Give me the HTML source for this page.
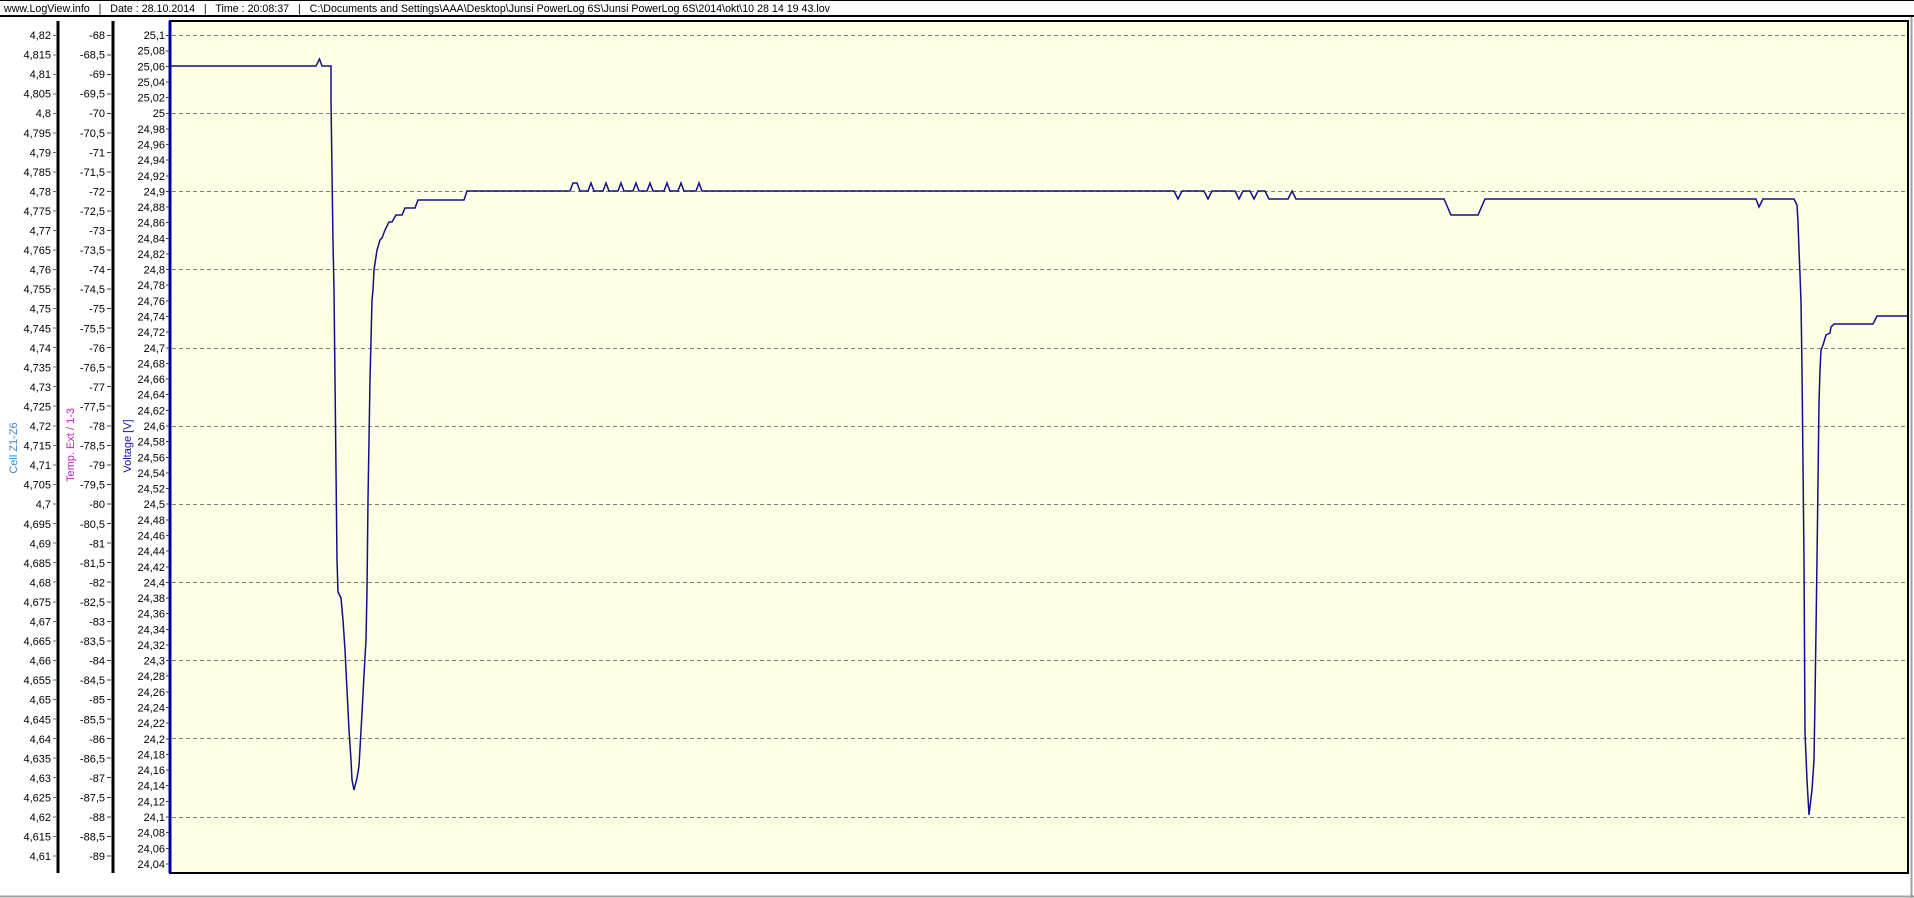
<!DOCTYPE html>
<html><head><meta charset="utf-8"><style>
html,body{margin:0;padding:0;background:#fff;width:1914px;height:898px;overflow:hidden}
svg{display:block}
text{font-family:"Liberation Sans",Arial,sans-serif}
</style></head><body>
<svg width="1914" height="898" viewBox="0 0 1914 898" xmlns="http://www.w3.org/2000/svg">
<rect width="1914" height="898" fill="#fff"/>
<line x1="0" y1="0.5" x2="1914" y2="0.5" stroke="#000"/>
<line x1="0" y1="16" x2="1914" y2="16" stroke="#000" stroke-width="2"/>
<text x="4" y="12" font-size="11" style="white-space:pre" xml:space="preserve" textLength="826" lengthAdjust="spacingAndGlyphs">www.LogView.info   |   Date : 28.10.2014   |   Time : 20:08:37   |   C:\Documents and Settings\AAA\Desktop\Junsi PowerLog 6S\Junsi PowerLog 6S\2014\okt\10 28 14 19 43.lov</text>
<line x1="1911.5" y1="17" x2="1911.5" y2="898" stroke="#a0a0a0" stroke-width="2"/>
<line x1="0" y1="896.5" x2="1914" y2="896.5" stroke="#a0a0a0" stroke-width="2"/>

<rect x="170" y="21" width="1738" height="852" fill="#ffffe6" stroke="#000" stroke-width="2"/>
<line x1="170" y1="21" x2="170" y2="873" stroke="#0000a0" stroke-width="3"/>
<line x1="58" y1="21" x2="58" y2="873" stroke="#000" stroke-width="3"/>
<line x1="113" y1="21" x2="113" y2="873" stroke="#000" stroke-width="3"/>

<g stroke="#808080" stroke-dasharray="4,3" stroke-width="1">
<line x1="172" y1="35.5" x2="1906" y2="35.5"/><line x1="172" y1="113.5" x2="1906" y2="113.5"/><line x1="172" y1="191.5" x2="1906" y2="191.5"/><line x1="172" y1="269.5" x2="1906" y2="269.5"/><line x1="172" y1="348.5" x2="1906" y2="348.5"/><line x1="172" y1="426.5" x2="1906" y2="426.5"/><line x1="172" y1="504.5" x2="1906" y2="504.5"/><line x1="172" y1="582.5" x2="1906" y2="582.5"/><line x1="172" y1="660.5" x2="1906" y2="660.5"/><line x1="172" y1="738.5" x2="1906" y2="738.5"/><line x1="172" y1="817.5" x2="1906" y2="817.5"/>
</g>

<g font-size="11" text-anchor="end">
<g fill="#000">
<text x="51" y="39">4,82</text><text x="51" y="58.6">4,815</text><text x="51" y="78.1">4,81</text><text x="51" y="97.7">4,805</text><text x="51" y="117.2">4,8</text><text x="51" y="136.8">4,795</text><text x="51" y="156.3">4,79</text><text x="51" y="175.9">4,785</text><text x="51" y="195.4">4,78</text><text x="51" y="215">4,775</text><text x="51" y="234.5">4,77</text><text x="51" y="254.1">4,765</text><text x="51" y="273.6">4,76</text><text x="51" y="293.2">4,755</text><text x="51" y="312.7">4,75</text><text x="51" y="332.3">4,745</text><text x="51" y="351.8">4,74</text><text x="51" y="371.4">4,735</text><text x="51" y="390.9">4,73</text><text x="51" y="410.5">4,725</text><text x="51" y="430">4,72</text><text x="51" y="449.6">4,715</text><text x="51" y="469.1">4,71</text><text x="51" y="488.7">4,705</text><text x="51" y="508.2">4,7</text><text x="51" y="527.8">4,695</text><text x="51" y="547.3">4,69</text><text x="51" y="566.9">4,685</text><text x="51" y="586.4">4,68</text><text x="51" y="606">4,675</text><text x="51" y="625.5">4,67</text><text x="51" y="645.1">4,665</text><text x="51" y="664.6">4,66</text><text x="51" y="684.2">4,655</text><text x="51" y="703.7">4,65</text><text x="51" y="723.3">4,645</text><text x="51" y="742.8">4,64</text><text x="51" y="762.4">4,635</text><text x="51" y="781.9">4,63</text><text x="51" y="801.5">4,625</text><text x="51" y="821">4,62</text><text x="51" y="840.6">4,615</text><text x="51" y="860.1">4,61</text>

<text x="105" y="39">-68</text><text x="105" y="58.6">-68,5</text><text x="105" y="78.1">-69</text><text x="105" y="97.7">-69,5</text><text x="105" y="117.2">-70</text><text x="105" y="136.8">-70,5</text><text x="105" y="156.3">-71</text><text x="105" y="175.9">-71,5</text><text x="105" y="195.4">-72</text><text x="105" y="215">-72,5</text><text x="105" y="234.5">-73</text><text x="105" y="254.1">-73,5</text><text x="105" y="273.6">-74</text><text x="105" y="293.2">-74,5</text><text x="105" y="312.7">-75</text><text x="105" y="332.3">-75,5</text><text x="105" y="351.8">-76</text><text x="105" y="371.4">-76,5</text><text x="105" y="390.9">-77</text><text x="105" y="410.5">-77,5</text><text x="105" y="430">-78</text><text x="105" y="449.6">-78,5</text><text x="105" y="469.1">-79</text><text x="105" y="488.7">-79,5</text><text x="105" y="508.2">-80</text><text x="105" y="527.8">-80,5</text><text x="105" y="547.3">-81</text><text x="105" y="566.9">-81,5</text><text x="105" y="586.4">-82</text><text x="105" y="606">-82,5</text><text x="105" y="625.5">-83</text><text x="105" y="645.1">-83,5</text><text x="105" y="664.6">-84</text><text x="105" y="684.2">-84,5</text><text x="105" y="703.7">-85</text><text x="105" y="723.3">-85,5</text><text x="105" y="742.8">-86</text><text x="105" y="762.4">-86,5</text><text x="105" y="781.9">-87</text><text x="105" y="801.5">-87,5</text><text x="105" y="821">-88</text><text x="105" y="840.6">-88,5</text><text x="105" y="860.1">-89</text>

<text x="165" y="39">25,1</text><text x="165" y="54.6">25,08</text><text x="165" y="70.3">25,06</text><text x="165" y="85.9">25,04</text><text x="165" y="101.6">25,02</text><text x="165" y="117.2">25</text><text x="165" y="132.8">24,98</text><text x="165" y="148.5">24,96</text><text x="165" y="164.1">24,94</text><text x="165" y="179.8">24,92</text><text x="165" y="195.4">24,9</text><text x="165" y="211">24,88</text><text x="165" y="226.7">24,86</text><text x="165" y="242.3">24,84</text><text x="165" y="258">24,82</text><text x="165" y="273.6">24,8</text><text x="165" y="289.2">24,78</text><text x="165" y="304.9">24,76</text><text x="165" y="320.5">24,74</text><text x="165" y="336.2">24,72</text><text x="165" y="351.8">24,7</text><text x="165" y="367.4">24,68</text><text x="165" y="383.1">24,66</text><text x="165" y="398.7">24,64</text><text x="165" y="414.4">24,62</text><text x="165" y="430">24,6</text><text x="165" y="445.6">24,58</text><text x="165" y="461.3">24,56</text><text x="165" y="476.9">24,54</text><text x="165" y="492.6">24,52</text><text x="165" y="508.2">24,5</text><text x="165" y="523.8">24,48</text><text x="165" y="539.5">24,46</text><text x="165" y="555.1">24,44</text><text x="165" y="570.8">24,42</text><text x="165" y="586.4">24,4</text><text x="165" y="602">24,38</text><text x="165" y="617.7">24,36</text><text x="165" y="633.3">24,34</text><text x="165" y="649">24,32</text><text x="165" y="664.6">24,3</text><text x="165" y="680.2">24,28</text><text x="165" y="695.9">24,26</text><text x="165" y="711.5">24,24</text><text x="165" y="727.2">24,22</text><text x="165" y="742.8">24,2</text><text x="165" y="758.4">24,18</text><text x="165" y="774.1">24,16</text><text x="165" y="789.7">24,14</text><text x="165" y="805.4">24,12</text><text x="165" y="821">24,1</text><text x="165" y="836.6">24,08</text><text x="165" y="852.3">24,06</text><text x="165" y="867.9">24,04</text>
</g>
</g>

<path stroke="#3a7cc8" stroke-width="1" d="M53 35.5h3M53 55h3M53 74.5h3M53 94h3M53 113.5h3M53 133h3M53 152.5h3M53 172h3M53 191.5h3M53 211h3M53 230.5h3M53 250h3M53 269.5h3M53 289h3M53 308.5h3M53 328h3M53 347.5h3M53 367h3M53 386.5h3M53 406h3M53 426h3M53 445.5h3M53 465h3M53 484.5h3M53 504h3M53 523.5h3M53 543h3M53 562.5h3M53 582h3M53 602h3M53 621.5h3M53 641h3M53 660.5h3M53 680h3M53 699.5h3M53 719h3M53 738.5h3M53 758h3M53 777.5h3M53 797.5h3M53 817h3M53 836.5h3M53 856h3"/>
<path stroke="#404040" stroke-width="1" d="M107 35.5h4M107 55h4M107 74.5h4M107 94h4M107 113.5h4M107 133h4M107 152.5h4M107 172h4M107 191.5h4M107 211h4M107 230.5h4M107 250h4M107 269.5h4M107 289h4M107 308.5h4M107 328h4M107 347.5h4M107 367h4M107 386.5h4M107 406h4M107 426h4M107 445.5h4M107 465h4M107 484.5h4M107 504h4M107 523.5h4M107 543h4M107 562.5h4M107 582h4M107 602h4M107 621.5h4M107 641h4M107 660.5h4M107 680h4M107 699.5h4M107 719h4M107 738.5h4M107 758h4M107 777.5h4M107 797.5h4M107 817h4M107 836.5h4M107 856h4"/>
<path stroke="#404040" stroke-width="1" d="M166 35.5h3M166 51h3M166 66.5h3M166 82h3M166 97.5h3M166 113.5h3M166 129h3M166 144.5h3M166 160h3M166 176h3M166 191.5h3M166 207h3M166 222.5h3M166 238.5h3M166 254h3M166 269.5h3M166 285h3M166 301h3M166 316.5h3M166 332h3M166 348h3M166 363.5h3M166 379h3M166 394.5h3M166 410.5h3M166 426h3M166 441.5h3M166 457.5h3M166 473h3M166 488.5h3M166 504h3M166 520h3M166 535.5h3M166 551h3M166 567h3M166 582.5h3M166 598h3M166 613.5h3M166 629.5h3M166 645h3M166 660.5h3M166 676h3M166 692h3M166 707.5h3M166 723h3M166 739h3M166 754.5h3M166 770h3M166 785.5h3M166 801.5h3M166 817h3M166 832.5h3M166 848.5h3M166 864h3"/>

<g font-size="11">
<text transform="translate(17,448) rotate(-90)" text-anchor="middle" fill="#3a8ad0">Cell Z1-Z6</text>
<text transform="translate(74,445) rotate(-90)" text-anchor="middle" fill="#c020c0">Temp. Ext / 1-3</text>
<text transform="translate(131,446) rotate(-90)" text-anchor="middle" fill="#1010a0">Voltage [V]</text>
</g>

<path fill="none" stroke="#10108a" stroke-width="1.5" stroke-linejoin="miter" d="
M171 66 L316 66 L319.5 59 L322 66 L331 66 L331 101 L332 172 L333 242 L334 290 L337 560 L338 592 L341 598 L343 620 L345 650 L347 690 L349 730 L351 760 L352 780 L354 790 L357 778 L359 766 L362 713 L364 675 L366 640 L367 590 L368 500 L370 380 L372 300 L373 290 L374 270 L377 250 L380 240 L382 238 L385 230 L389 222 L392 222 L396 215 L402 215 L405 208 L415 208 L418 200 L464 200 L467 191 L570 191
L573 183 L577 183 L580 191 L588 191 L591 183 L594 191 L603 191 L606 183 L609 191 L618 191 L621 183 L624 191 L633 191 L636 183 L639 191 L647 191 L650 183 L653 191 L664 191 L667 183 L670 191 L678 191 L681 183 L684 191 L696 191 L699 183 L702 191
L1174 191 L1178 199 L1182 191 L1204 191 L1208 199 L1212 191 L1235 191 L1239 199 L1243 191 L1250 191 L1254 199 L1258 191 L1265 191 L1269 199 L1288 199 L1292 191 L1296 199 L1444 199 L1451 215 L1478 215 L1485 199 L1756 199 L1759 207 L1763 199 L1794 199 L1797 205 L1798 222 L1799 250 L1800 275 L1801 302 L1802 370 L1804 560 L1805 732 L1807 780 L1809 815 L1812 790 L1814 760 L1815 700 L1817 560 L1819 403 L1820 370 L1821 350 L1823 345 L1826 335 L1830 333 L1831 327 L1834 324 L1873 324 L1877 316 L1907 316"/>
</svg>
</body></html>
